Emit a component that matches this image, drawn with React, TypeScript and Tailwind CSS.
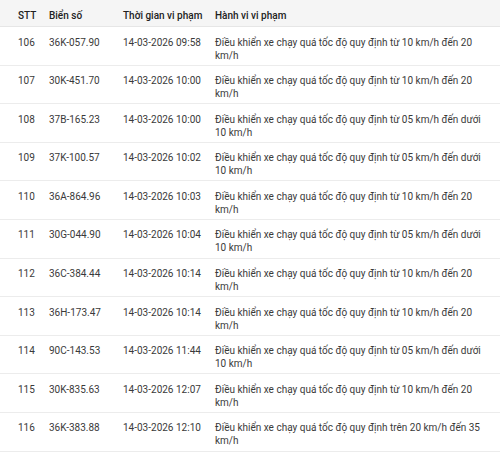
const rows = [
  ['106', '36K-057.90', '14-03-2026 09:58', 'từ 10 km/h đến 20 km/h'],
  ['107', '30K-451.70', '14-03-2026 10:00', 'từ 10 km/h đến 20 km/h'],
  ['108', '37B-165.23', '14-03-2026 10:00', 'từ 05 km/h đến dưới 10 km/h'],
  ['109', '37K-100.57', '14-03-2026 10:02', 'từ 05 km/h đến dưới 10 km/h'],
  ['110', '36A-864.96', '14-03-2026 10:03', 'từ 10 km/h đến 20 km/h'],
  ['111', '30G-044.90', '14-03-2026 10:04', 'từ 05 km/h đến dưới 10 km/h'],
  ['112', '36C-384.44', '14-03-2026 10:14', 'từ 10 km/h đến 20 km/h'],
  ['113', '36H-173.47', '14-03-2026 10:14', 'từ 10 km/h đến 20 km/h'],
  ['114', '90C-143.53', '14-03-2026 11:44', 'từ 05 km/h đến dưới 10 km/h'],
  ['115', '30K-835.63', '14-03-2026 12:07', 'từ 10 km/h đến 20 km/h'],
  ['116', '36K-383.88', '14-03-2026 12:10', 'trên 20 km/h đến 35 km/h'],
]

export default function App() {
  return (
    <div className="w-[500px] bg-white font-['Roboto',sans-serif] text-[10px]">
      {/* Header */}
      <div className="grid grid-cols-[49px_74px_92px_1fr] h-[27px] items-center pt-[4px] bg-[#f5f5f5] border-b border-[#e6e6e6] font-medium text-[#212121]">
        <div className="pl-[18px]">STT</div>
        <div>Biển số</div>
        <div>Thời gian vi phạm</div>
        <div>Hành vi vi phạm</div>
      </div>

      {rows.map((r) => (
        <div
          key={r[0]}
          className="grid grid-cols-[49px_74px_92px_1fr] h-[38.6px] pt-[8.5px] leading-[13px] border-b border-[#ececec] text-[#3a3a3a]"
        >
          <div className="pl-[18px]">{r[0]}</div>
          <div>{r[1]}</div>
          <div>{r[2]}</div>
          <div className="pr-[12px]">Điều khiển xe chạy quá tốc độ quy định {r[3]}</div>
        </div>
      ))}
    </div>
  )
}
